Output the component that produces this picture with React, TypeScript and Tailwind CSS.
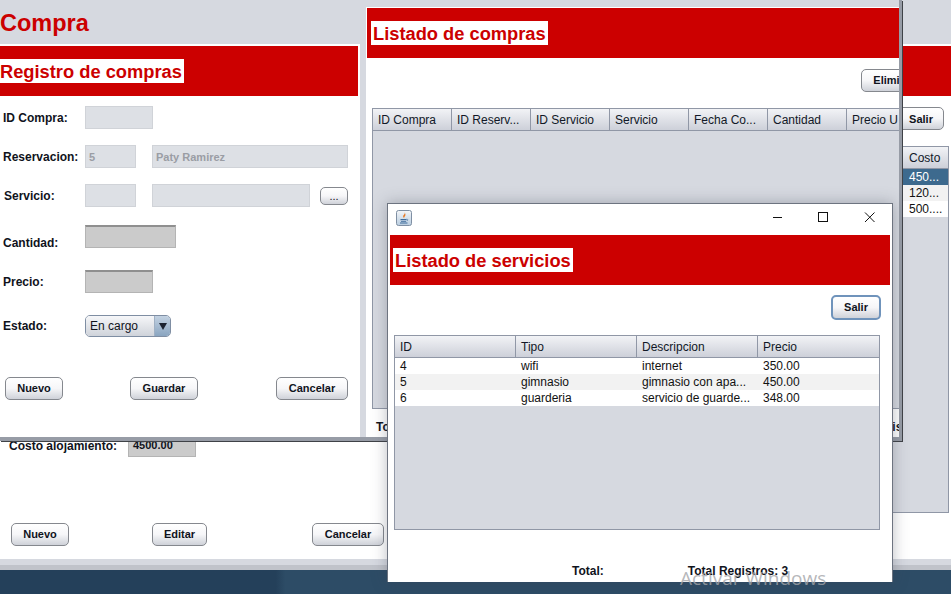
import React from "react";

const FONT = "font-['Liberation_Sans',Arial,sans-serif]";

function Btn({ label, w, h = "h-[23px]", focused = false, className = "" }: { label: string; w: string; h?: string; focused?: boolean; className?: string }) {
  return (
    <div
      className={`${w} ${h} ${className} shrink-0 flex items-center justify-center rounded-[5px] border ${
        focused ? "border-2 border-[#6f93bb]" : "border-[#85888e]"
      } bg-linear-to-b from-[#ffffff] via-[#f6f6f8] to-[#cfd2d9] text-[11px] font-bold text-[#10131c] whitespace-nowrap`}
    >
      {label}
    </div>
  );
}

function Field({ w, children, dark = false }: { w: string; children?: React.ReactNode; dark?: boolean }) {
  return (
    <div
      className={`${w} h-[23px] shrink-0 flex items-center px-[3px] pt-[1px] text-[11px] font-bold ${
        dark
          ? "bg-[#cbcbcb] border border-[#b4b4b4] border-t-2 border-t-[#8f8f8f]"
          : "bg-[#dde0e5] border border-[#d0d3d8] text-[#9a9da4]"
      }`}
    >
      {children}
    </div>
  );
}

function Label({ children, className = "" }: { children: string; className?: string }) {
  return <div className={`w-[82px] ml-[3px] shrink-0 text-[12px] font-bold text-[#10131c] ${className}`}>{children}</div>;
}

function Header({ title, left = "" }: { title: string; left?: string }) {
  return (
    <div className="h-[50px] bg-[#cc0000] flex items-center shrink-0">
      <div className={`h-[24px] bg-white px-[2px] pt-[1px] flex items-center text-[18.3px] font-bold text-[#cc0000] whitespace-nowrap ${left}`}>{title}</div>
    </div>
  );
}

function HeadCell({ label, w }: { label: string; w: string }) {
  return (
    <div className={`${w} h-full shrink-0 flex items-center px-[5px] border-r border-[#9097a6] whitespace-nowrap overflow-hidden text-[12px] text-[#111827]`}>
      {label}
    </div>
  );
}

function JavaIcon() {
  return (
    <svg width="16" height="16" viewBox="0 0 16 16" className="shrink-0 mt-[6px]">
      <defs>
        <linearGradient id="jg" x1="0" y1="0" x2="0" y2="1">
          <stop offset="0" stopColor="#f4f6f9" />
          <stop offset="1" stopColor="#b9cde0" />
        </linearGradient>
      </defs>
      <rect x="0.5" y="0.5" width="15" height="15" rx="2" fill="url(#jg)" stroke="#7f8fa3" />
      <path d="M8.500 2C9.800 4 6.800 5 7.200 6.800c.1.700.6 1 .9 1.500C7.800 6.800 10 5.800 9.400 4.200 9.200 3.400 8.900 2.600 8.500 2Z" fill="#e8761e" />
      <path d="M4.500 9h6v1.200h-6zM5 11h5v.8H5zM4 12.600h7.500v.8H4z" fill="#3d6a9a" />
      <path d="M10.500 9.200c1.500-.3 1.800 1.200.3 1.700" fill="none" stroke="#3d6a9a" strokeWidth="0.7" />
    </svg>
  );
}

function BackWindow() {
  return (
    <div className="absolute left-0 top-0 w-[951px] h-[570px] bg-[#d6d9e0] border-b-[5px] border-[#c0c3ca] flex justify-between pt-[44px] pb-[6px]">
      <div className="w-[388px] bg-white flex flex-col justify-end px-[11px] pb-[13px]">
        <div className="flex items-start mb-[66px]">
          <div className="ml-[-2px] w-[119px] pt-[2px] text-[12px] font-bold text-[#10131c]">Costo alojamiento:</div>
          <div className="w-[68px] h-[22px] bg-[#cbcbcb] border border-[#b4b4b4] flex items-start px-[4px] pt-[1px] text-[11px] font-bold text-[#10131c]">4500.00</div>
        </div>
        <div className="flex">
          <Btn label="Nuevo" w="w-[58px]" />
          <Btn label="Editar" w="w-[55px]" className="ml-[83px]" />
          <Btn label="Cancelar" w="w-[72px]" className="ml-[105px]" />
        </div>
      </div>
      <div className="w-[60px] bg-white flex flex-col">
        <div className="h-[2px] shrink-0" />
        <div className="h-[50px] shrink-0 bg-[#cc0000]" />
        <div className="h-[11px] shrink-0" />
        <Btn label="Salir" w="w-[48px]" className="ml-[5px] pl-[2px] pt-[1px]" />
        <div className="h-[16px] shrink-0" />
        <div className="w-[58px] h-[367px] bg-[#d6d9e0] border border-[#9097a6] flex flex-col shrink-0">
          <div className="h-[22px] shrink-0 bg-linear-to-b from-[#f2f3f6] to-[#cdd0d9] border-b border-[#9097a6] flex items-center pl-[17px] text-[12px] text-[#111827]">Costo</div>
          <div className="h-[16px] bg-[#3d6a8e] text-white text-[12px] flex items-center pl-[17px]">450...</div>
          <div className="h-[16px] bg-[#f2f2f2] text-[#111] text-[12px] flex items-center pl-[17px]">120...</div>
          <div className="h-[16px] bg-white text-[#111] text-[12px] flex items-center pl-[17px]">500....</div>
        </div>
      </div>
    </div>
  );
}

function FrontWindow() {
  const cols = ["ID Compra", "ID Reserv...", "ID Servicio", "Servicio", "Fecha Co...", "Cantidad", "Precio U"];
  return (
    <div className="absolute left-0 top-0 w-[902px] h-[441px] bg-[#d6d9e0] border-r-[3px] border-b-[4px] border-r-[#979ca6] border-b-[#979ca6] shadow-[1px_1px_0_#3f4247] flex">
      <div className="w-[366px] shrink-0 flex flex-col">
        <div className="h-[44px] shrink-0 text-[23.5px] font-bold text-[#cc0000] flex items-center leading-none pt-[4px]">Compra</div>
        <div className="w-[360px] flex-1 bg-white pt-[2px] flex flex-col">
          <div className="w-[358px]">
            <Header title="Registro de compras" left="ml-[-2px]" />
          </div>
          <div className="flex items-center mt-[10px]">
            <Label>ID Compra:</Label>
            <Field w="w-[68px]" />
          </div>
          <div className="flex items-center mt-[16px]">
            <Label className="pt-[1px]">Reservacion:</Label>
            <Field w="w-[51px]">5</Field>
            <div className="w-[16px]" />
            <Field w="w-[196px]">Paty Ramirez</Field>
          </div>
          <div className="flex items-center mt-[16px]">
            <Label className="pl-[1px]">Servicio:</Label>
            <Field w="w-[51px]" />
            <div className="w-[16px]" />
            <Field w="w-[158px]" />
            <Btn label="..." w="w-[28px]" h="h-[18px]" className="ml-[10px] mt-[1px] font-normal" />
          </div>
          <div className="flex items-start mt-[18px]">
            <Label className="h-[12px] leading-[14px] mt-[11px]">Cantidad:</Label>
            <Field w="w-[91px]" dark />
          </div>
          <div className="flex items-center mt-[22px]">
            <Label>Precio:</Label>
            <Field w="w-[68px]" dark />
          </div>
          <div className="flex items-center mt-[22px]">
            <Label>Estado:</Label>
            <div className="w-[86px] h-[22px] flex rounded-[5px] border border-[#7f8ea3] overflow-hidden text-[12px] text-[#10131c]">
              <div className="flex-1 flex items-center pl-[4px] bg-linear-to-b from-[#f6f7f9] to-[#cfd3da]">En cargo</div>
              <div className="w-[16px] flex items-center justify-center bg-linear-to-b from-[#c3d2e2] to-[#8aa5c0] border-l border-[#9fb0c4]">
                <svg width="8" height="8" viewBox="0 0 8 8"><path d="M0 1h8L4 8Z" fill="#1b2230" /></svg>
              </div>
            </div>
          </div>
          <div className="flex mt-[40px] pl-[5px]">
            <Btn label="Nuevo" w="w-[58px]" />
            <Btn label="Guardar" w="w-[68px]" className="ml-[67px]" />
            <Btn label="Cancelar" w="w-[72px]" className="ml-[78px]" />
          </div>
        </div>
      </div>
      <div className="w-[533px] shrink-0 mt-[7px] bg-white pl-[1px] flex flex-col overflow-hidden">
        <div className="h-[1px] shrink-0" />
        <Header title="Listado de compras" left="ml-[4px]" />
        <div className="h-[11px] shrink-0" />
        <div className="flex justify-end">
          <Btn label="Eliminar" w="w-[68px]" className="mr-[-30px]" />
        </div>
        <div className="h-[16px] shrink-0" />
        <div className="ml-[5px] w-[560px] h-[301px] shrink-0 border border-[#9097a6] bg-[#d6d9e0]">
          <div className="h-[22px] flex bg-linear-to-b from-[#f2f3f6] to-[#cdd0d9] border-b border-[#9097a6]">
            {cols.map((c) => (
              <HeadCell key={c} label={c} w="w-[79px]" />
            ))}
          </div>
        </div>
        <div className="flex justify-between ml-[9px] mr-[-40px] mt-[9px] text-[12px] font-bold text-[#10131c] whitespace-nowrap">
          <span>Total:</span>
          <span>Total Registros: 3</span>
        </div>
      </div>
    </div>
  );
}

function Dialog() {
  const rows = [
    ["4", "wifi", "internet", "350.00", "bg-white"],
    ["5", "gimnasio", "gimnasio con apa...", "450.00", "bg-[#f2f2f2]"],
    ["6", "guarderia", "servicio de guarde...", "348.00", "bg-white"],
  ];
  return (
    <div className="absolute left-[387px] top-[203px] w-[506px] h-[379px] bg-white border-x border-t border-[#6d7480] shadow-[0_0_14px_rgba(60,65,80,0.35)] flex flex-col">
      <div className="h-[31px] shrink-0 flex items-start pl-[8px]">
        <JavaIcon />
        <svg width="103" height="12" viewBox="0 0 103 12" className="ml-auto mr-[17px] mt-[7px]" fill="none" stroke="#111" strokeWidth="1">
          <path d="M1 6.500h9" />
          <rect x="46.500" y="1.500" width="9" height="9" />
          <path d="M93 1.500l9.500 9.500M102.500 1.500L93 11" />
        </svg>
      </div>
      <div className="mx-[2px]">
        <Header title="Listado de servicios" left="ml-[3px]" />
      </div>
      <div className="flex justify-end pr-[11px] mt-[10px]">
        <Btn label="Salir" w="w-[50px]" h="h-[25px]" focused />
      </div>
      <div className="ml-[6px] w-[486px] mt-[15px] h-[195px] shrink-0 border border-[#9097a6] bg-[#d6d9e0]">
        <div className="h-[22px] flex bg-linear-to-b from-[#f2f3f6] to-[#cdd0d9] border-b border-[#9097a6]">
          <HeadCell label="ID" w="w-[121px]" />
          <HeadCell label="Tipo" w="w-[121px]" />
          <HeadCell label="Descripcion" w="w-[121px]" />
          <div className="flex-1 flex items-center px-[5px] text-[12px] text-[#111827]">Precio</div>
        </div>
        {rows.map((r) => (
          <div key={r[0]} className={`h-[16px] flex items-center text-[12px] text-[#111] ${r[4]}`}>
            <div className="w-[121px] pl-[5px]">{r[0]}</div>
            <div className="w-[121px] pl-[5px]">{r[1]}</div>
            <div className="w-[121px] pl-[5px] whitespace-nowrap">{r[2]}</div>
            <div className="w-[121px] pl-[5px]">{r[3]}</div>
          </div>
        ))}
      </div>
      <div className="flex mt-[32px] text-[12px] font-bold text-[#10131c] whitespace-nowrap">
        <span className="ml-[184px]">Total:</span>
        <span className="ml-[84px]">Total Registros: 3</span>
      </div>
    </div>
  );
}

export default function App() {
  return (
    <div className={`relative w-[951px] h-[594px] overflow-hidden bg-linear-to-r from-[#24405a] from-[29%] to-[#2d4c66] to-[30%] ${FONT}`}>
      <BackWindow />
      <FrontWindow />
      <Dialog />
      <div className="absolute left-[680px] top-[564px] text-[19px] text-[#a3a5a9]/80 font-['Open_Sans',sans-serif] whitespace-nowrap">Activar Windows</div>
    </div>
  );
}
